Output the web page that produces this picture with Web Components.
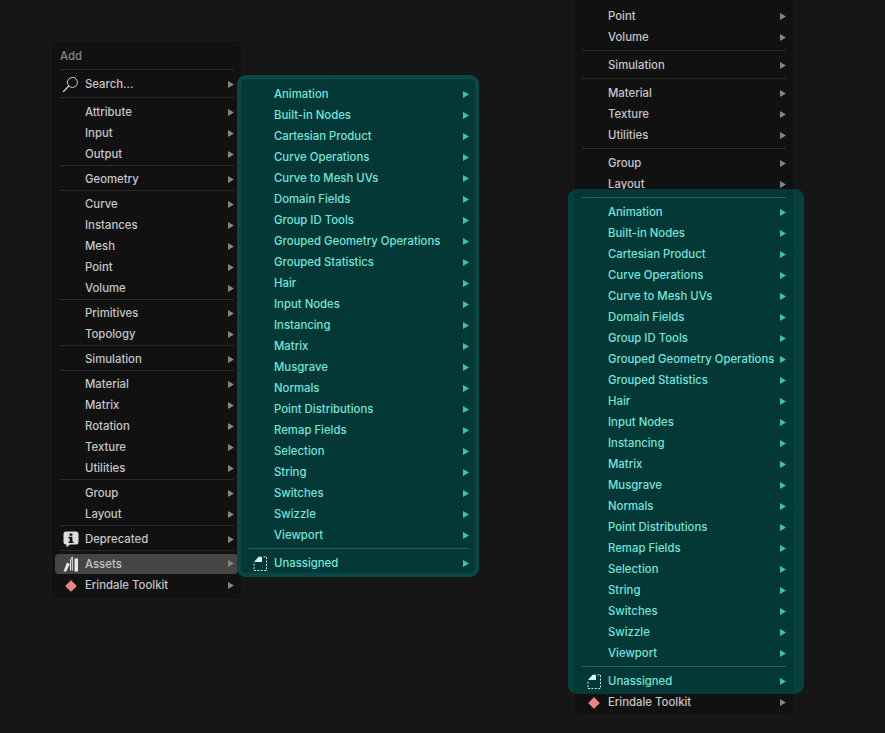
<!DOCTYPE html>
<html lang="en">
<head>
<meta charset="utf-8">
<title>Add menu</title>
<style>
html,body{margin:0;padding:0;background:#161616}
</style>
</head>
<body>
<template id="t-canvas"><style>
:host{display:block;position:relative;width:885px;height:733px;overflow:hidden;background:#161616;font-family:Inter,"Liberation Sans",sans-serif;font-size:11.35px;font-weight:500;color:#cfcfcf}
</style><slot></slot></template>

<template id="t-menu"><style>
:host{display:block;position:absolute;box-sizing:border-box;left:var(--x);top:var(--y);width:var(--w);height:var(--h);background:#111;border-radius:4px;box-shadow:0 0 0 1px #191919;padding-top:var(--pt,0)}
</style><slot></slot></template>

<template id="t-glow"><style>
:host{display:block;position:absolute;left:var(--gx);top:var(--gy);width:var(--gw);height:var(--gh);border-radius:9px;z-index:1;pointer-events:none;
background:linear-gradient(90deg,rgba(3,68,65,.93) 6px,rgba(2,59,57,.93) 6px,rgba(2,59,57,.93) 225px,rgba(3,68,65,.93) 225px)}
:host([ring]){background:#033836;box-shadow:inset 0 0 0 4px #084745}
</style></template>

<template id="t-row"><style>
:host{display:flex;align-items:center;height:21px;margin:0 3px;padding:0 4px 0 6px;line-height:21px;border-radius:4px;color:#c6c6c6;--arrow:#858585;white-space:nowrap}
:host([accent]){position:relative;z-index:2;color:#74e4da;--arrow:#3fc0b5}
:host([active]){background:#454545;height:20px;margin-bottom:1px}
:host([title-row]){color:#858585;padding-left:5px}
.icon{flex:none;width:20px;height:21px;margin-right:4px;display:flex;align-items:center;justify-content:center}
.label{flex:1;min-width:0}
svg{flex:none;display:block;width:6px;height:7px;margin-top:-1px;fill:var(--arrow)}
:host([title-row]) svg,:host([title-row]) .icon{display:none}
</style><span class="icon"><slot name="icon"></slot></span><span class="label"><slot></slot></span><svg viewBox="0 0 6 7"><polygon points="0,0 6,3.5 0,7"/></svg></template>

<template id="t-sep"><style>
:host{display:block;height:4px;box-sizing:border-box;margin:0 7px;position:relative}
:host([wide]){height:7px;padding-top:2px}
:host([accent]){z-index:2}
div{height:1px;background:#2a2a2a}
:host([accent]) div{background:#12665f}
</style><div></div></template>

<bl-canvas>
  <bl-menu style="--x:52px;--y:41px;--w:189px;--h:558px;--pt:5px">
    <bl-row title-row>Add</bl-row>
    <bl-sep wide></bl-sep>
    <bl-row><bl-icon name="search" slot="icon"></bl-icon>Search...</bl-row>
    <bl-sep wide></bl-sep>
    <bl-row>Attribute</bl-row><bl-row>Input</bl-row><bl-row>Output</bl-row>
    <bl-sep></bl-sep>
    <bl-row>Geometry</bl-row>
    <bl-sep></bl-sep>
    <bl-row>Curve</bl-row><bl-row>Instances</bl-row><bl-row>Mesh</bl-row><bl-row>Point</bl-row><bl-row>Volume</bl-row>
    <bl-sep></bl-sep>
    <bl-row>Primitives</bl-row><bl-row>Topology</bl-row>
    <bl-sep></bl-sep>
    <bl-row>Simulation</bl-row>
    <bl-sep></bl-sep>
    <bl-row>Material</bl-row><bl-row>Matrix</bl-row><bl-row>Rotation</bl-row><bl-row>Texture</bl-row><bl-row>Utilities</bl-row>
    <bl-sep></bl-sep>
    <bl-row>Group</bl-row><bl-row>Layout</bl-row>
    <bl-sep></bl-sep>
    <bl-row><bl-icon name="info" slot="icon"></bl-icon>Deprecated</bl-row>
    <bl-sep></bl-sep>
    <bl-row active><bl-icon name="assets" slot="icon"></bl-icon>Assets</bl-row>
    <bl-row><bl-icon name="diamond" slot="icon"></bl-icon>Erindale Toolkit</bl-row>
  </bl-menu>

  <bl-menu style="--x:241px;--y:79px;--w:235px;--h:494px;--pt:5px">
    <bl-glow ring style="--gx:-4px;--gy:-4px;--gw:242px;--gh:502px"></bl-glow>
    <bl-row accent>Animation</bl-row><bl-row accent>Built-in Nodes</bl-row><bl-row accent>Cartesian Product</bl-row><bl-row accent>Curve Operations</bl-row><bl-row accent>Curve to Mesh UVs</bl-row><bl-row accent>Domain Fields</bl-row><bl-row accent>Group ID Tools</bl-row><bl-row accent>Grouped Geometry Operations</bl-row><bl-row accent>Grouped Statistics</bl-row><bl-row accent>Hair</bl-row><bl-row accent>Input Nodes</bl-row><bl-row accent>Instancing</bl-row><bl-row accent>Matrix</bl-row><bl-row accent>Musgrave</bl-row><bl-row accent>Normals</bl-row><bl-row accent>Point Distributions</bl-row><bl-row accent>Remap Fields</bl-row><bl-row accent>Selection</bl-row><bl-row accent>String</bl-row><bl-row accent>Switches</bl-row><bl-row accent>Swizzle</bl-row><bl-row accent>Viewport</bl-row>
    <bl-sep wide accent></bl-sep>
    <bl-row accent><bl-icon name="file" slot="icon"></bl-icon>Unassigned</bl-row>
  </bl-menu>

  <bl-menu style="--x:575px;--y:-4px;--w:218px;--h:719px;--pt:10px">
    <bl-glow style="--gx:-7px;--gy:193px;--gw:236px;--gh:505px"></bl-glow>
    <bl-row>Point</bl-row><bl-row>Volume</bl-row>
    <bl-sep wide></bl-sep>
    <bl-row>Simulation</bl-row>
    <bl-sep wide></bl-sep>
    <bl-row>Material</bl-row><bl-row>Texture</bl-row><bl-row>Utilities</bl-row>
    <bl-sep wide></bl-sep>
    <bl-row>Group</bl-row><bl-row>Layout</bl-row>
    <bl-sep wide accent></bl-sep>
    <bl-row accent>Animation</bl-row><bl-row accent>Built-in Nodes</bl-row><bl-row accent>Cartesian Product</bl-row><bl-row accent>Curve Operations</bl-row><bl-row accent>Curve to Mesh UVs</bl-row><bl-row accent>Domain Fields</bl-row><bl-row accent>Group ID Tools</bl-row><bl-row accent>Grouped Geometry Operations</bl-row><bl-row accent>Grouped Statistics</bl-row><bl-row accent>Hair</bl-row><bl-row accent>Input Nodes</bl-row><bl-row accent>Instancing</bl-row><bl-row accent>Matrix</bl-row><bl-row accent>Musgrave</bl-row><bl-row accent>Normals</bl-row><bl-row accent>Point Distributions</bl-row><bl-row accent>Remap Fields</bl-row><bl-row accent>Selection</bl-row><bl-row accent>String</bl-row><bl-row accent>Switches</bl-row><bl-row accent>Swizzle</bl-row><bl-row accent>Viewport</bl-row>
    <bl-sep wide accent></bl-sep>
    <bl-row accent><bl-icon name="file" slot="icon"></bl-icon>Unassigned</bl-row>
    <bl-row><bl-icon name="diamond" slot="icon"></bl-icon>Erindale Toolkit</bl-row>
  </bl-menu>
</bl-canvas>

<script>
const ICONS = {
  search: '<svg width="18" height="18" viewBox="0 0 18 18" fill="none" stroke="#d0d0d0"><circle cx="10.4" cy="6.4" r="5"/><path d="M6.8 10 1.5 15.5" stroke-width="1.2" stroke-linecap="round"/></svg>',
  info: '<svg width="16" height="17" viewBox="0 0 16 17"><path fill="#dcdcdc" d="M3 0.5h10a2.5 2.5 0 0 1 2.5 2.5v8a2.5 2.5 0 0 1-2.5 2.5H7L3.5 16.3V13.5H3A2.5 2.5 0 0 1 .5 11V3A2.5 2.5 0 0 1 3 .5z"/><path fill="#111" d="M6.6 2.4h2.8v2.4H6.6zM5.6 5.8h3.8v4.6h1.1v1.6H5.6v-1.6h1.1V7.4H5.6z"/></svg>',
  assets: '<svg width="16" height="16" viewBox="0 0 16 16"><path fill="#e8e8e8" d="M4 6.5 6.8 8 3.2 15.5H.5z"/><path fill="none" stroke="#e8e8e8" stroke-width="1" d="M7.5 14.5 V4 L9.3 .8 V14.5"/><path fill="#e8e8e8" d="M11.5 2.5h3.5v13h-3.5z"/></svg>',
  diamond: '<svg width="16" height="16" viewBox="0 0 16 16" style="margin-left:-1px"><path fill="#e98484" stroke="#0a0a0a" d="M8 1.6 14.4 8 8 14.4 1.6 8z"/></svg>',
  file: '<svg width="15" height="16" viewBox="0 0 15 16"><path fill="#d7f3ee" d="M1 6 5.6 .7H9V6z"/><path fill="none" stroke="#c4ede6" stroke-dasharray="2 1.4" d="M10.5 .8h3v13.7H1V7.2"/></svg>'
};
function define(name, tpl) {
  customElements.define(name, class extends HTMLElement {
    constructor() {
      super();
      const root = this.attachShadow({ mode: 'open' });
      root.appendChild(document.getElementById(tpl).content.cloneNode(true));
    }
  });
}
define('bl-canvas', 't-canvas');
define('bl-menu', 't-menu');
define('bl-glow', 't-glow');
define('bl-row', 't-row');
define('bl-sep', 't-sep');
customElements.define('bl-icon', class extends HTMLElement {
  constructor() {
    super();
    const root = this.attachShadow({ mode: 'open' });
    root.innerHTML = '<style>:host{display:flex;align-items:center;justify-content:center}svg{display:block}</style>' + (ICONS[this.getAttribute('name')] || '');
  }
});
</script>
</body>
</html>
